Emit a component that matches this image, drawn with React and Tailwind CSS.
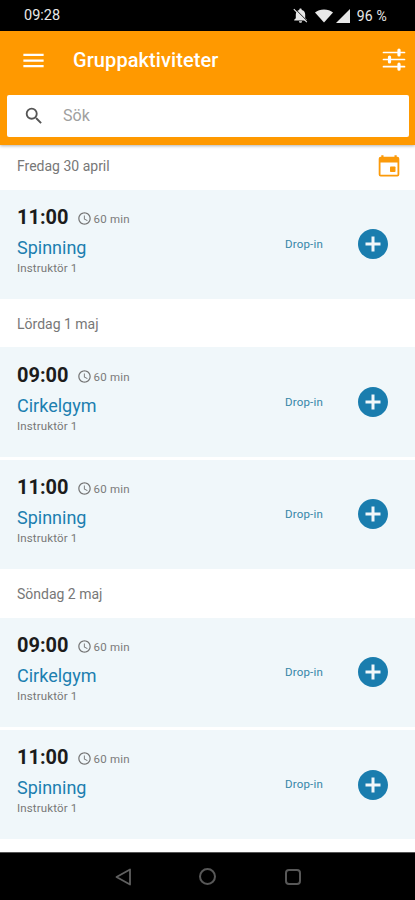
import React from 'react'
import { MdMenu, MdSearch, MdAddCircle, MdAccessTime } from 'react-icons/md';

const days = [
    {
        date: 'Fredag 30 april',
        calendar: true,
        classes: [{ time: '11:00', name: 'Spinning' }],
    },
    {
        date: 'Lördag 1 maj',
        classes: [
            { time: '09:00', name: 'Cirkelgym' },
            { time: '11:00', name: 'Spinning' },
        ],
    },
    {
        date: 'Söndag 2 maj',
        classes: [
            { time: '09:00', name: 'Cirkelgym' },
            { time: '11:00', name: 'Spinning' },
        ],
    },
];

function StatusBar() {
    return (
        <div className="flex h-[31px] shrink-0 items-center bg-black pl-6 pr-[28px] text-[#e8e8e8]">
            <span className="pt-px text-[14.5px] leading-4">09:28</span>
            <div className="ml-auto flex items-center">
                <svg viewBox="0 0 15 15" className="size-[15px]">
                    <path fill="currentColor" d="M7.5 0.500c.8 0 1.200.5 1.200 1.100v.4c2.200.5 3.500 2.200 3.500 4.500v3.700l1.600 1.600v.8H1.200v-.8l1.600-1.600V6.500C2.800 4.200 4.100 2.500 6.300 2v-.4c0-.6.4-1.100 1.200-1.100zM5.900 13.200h3.200a1.600 1.600 0 0 1-3.200 0z" />
                    <path stroke="#000" strokeWidth="0.900" d="M2 .8 14.500 13.300" />
                    <path stroke="currentColor" strokeWidth="1.100" d="m.8 1.100 13 13" />
                </svg>
                <svg viewBox="0 0 18 14" className="ml-[7px] h-[14px] w-[18px]" fill="currentColor">
                    <path d="M9 13.500 0 3.600C2.400 1.600 5.500.5 9 .5s6.600 1.100 9 3.100z" />
                </svg>
                <svg viewBox="0 0 14 14" className="ml-[3px] size-[14px]" fill="currentColor">
                    <path d="M14 0v14H0z" />
                </svg>
                <span className="ml-[7px] text-[14px] leading-4 tracking-[0.2px]">96 %</span>
            </div>
        </div>
    )
}

function TuneIcon() {
    return (
        <svg viewBox="0 0 24 24" className="mr-px size-[24px]" stroke="currentColor" strokeLinecap="round">
            <path strokeWidth="1.700" d="M1.500 4.500h21M1.500 11.500h21M1.500 18.700h21" />
            <path strokeWidth="3.200" d="M17 2v5M7.500 9v5M17 16.200v5" />
        </svg>
    )
}

function CalendarIcon() {
    return (
        <svg viewBox="0 0 22 22" className="size-[22px]">
            <path
                fill="#fb9a0a"
                fillRule="evenodd"
                d="M3.300.3h2.200v1.500h11V.3h2.200v1.500h.6a2 2 0 0 1 2 2v15.700a2 2 0 0 1-2 2H2.700a2 2 0 0 1-2-2V3.800a2 2 0 0 1 2-2h.6zM2.500 7.500v12.200h17V7.500z"
            />
            <rect x="12" y="11.500" width="5.500" height="5.500" rx="0.800" fill="#fb9a0a" />
        </svg>
    )
}

function ClassRow({ time, name }) {
    return (
        <div className="flex h-[109.600px] items-center bg-[#f0f7fa] pl-[17px] pr-[24px]">
            <div className="h-full grow pt-[15.300px]">
                <div className="flex h-6 items-center">
                    <span className="text-[20px] font-bold text-[#1c1c1c]">{time}</span>
                    <MdAccessTime className="ml-2 mt-[3px] size-[15px] text-[#777]" />
                    <span className="ml-[2px] mt-[5px] text-[11.500px] tracking-[0.2px] text-[#7b7b7b]">60 min</span>
                </div>
                <div className="mt-[7px] text-[18px] leading-6 text-[#1c7fb0]">{name}</div>
                <div className="text-[11.500px] leading-4 tracking-[0.15px] text-[#777]">Instruktör 1</div>
            </div>
            <span className="mr-8 text-[11.500px] tracking-[0.2px] text-[#3586a8]">Drop-in</span>
            <MdAddCircle className="size-[36px] text-[#1a7dae]" />
        </div>
    )
}

// lista med dagar och pass
function Schedule() {
    return (
        <div className="grow bg-white">
            {days.map((day) => (
                <section key={day.date}>
                    <div className={`flex items-center justify-between pl-[17px] pr-[15px] ${day.calendar ? 'h-[44.500px] pb-[2px]' : 'h-[48.300px] pt-[2px]'}`}>
                        <span className="text-[14px] text-[#777]">{day.date}</span>
                        {day.calendar && <CalendarIcon />}
                    </div>
                    <div className="flex flex-col gap-[2.700px]">
                        {day.classes.map((c) => (
                            <ClassRow key={c.time} time={c.time} name={c.name} />
                        ))}
                    </div>
                </section>
            ))}
        </div>
    )
}

export default function App() {
    return (
        <div className="flex h-[900px] w-[415px] flex-col overflow-hidden bg-white font-['Roboto',sans-serif]">
            <StatusBar />
            <header className="relative h-[114px] shrink-0 bg-[#ff9900] shadow-[0_1px_3px_rgba(0,0,0,0.3)]">
                <div className="flex h-[58px] items-center pl-[19.500px] pr-[8px] text-white">
                    <MdMenu className="size-[27px]" />
                    <h1 className="ml-[26.500px] grow text-[20px] font-medium tracking-[0.08px]">Gruppaktiviteter</h1>
                    <TuneIcon />
                </div>
                <div className="ml-[7px] mr-[6px] mt-[6px] flex h-[42px] items-center rounded-[2px] bg-white pl-4">
                    <MdSearch className="size-[22px] text-[#555]" />
                    <span className="ml-[18px] text-[16px] text-[#a0a0a0]">Sök</span>
                </div>
            </header>
            <Schedule />
            <nav className="flex h-12 shrink-0 items-center border-t border-[#555] bg-black pl-[115px]">
                <svg viewBox="0 0 16 18" className="h-[18px] w-[16px]" fill="none" stroke="#606060" strokeWidth="1.800" strokeLinejoin="round">
                    <path d="M15 1.500v15L1.500 9z" />
                </svg>
                <div className="ml-[68px] size-[17px] rounded-full border-2 border-[#585858]" />
                <div className="ml-[69px] size-[16px] rounded-[4px] border-2 border-[#585858]" />
            </nav>
        </div>
    )
}
